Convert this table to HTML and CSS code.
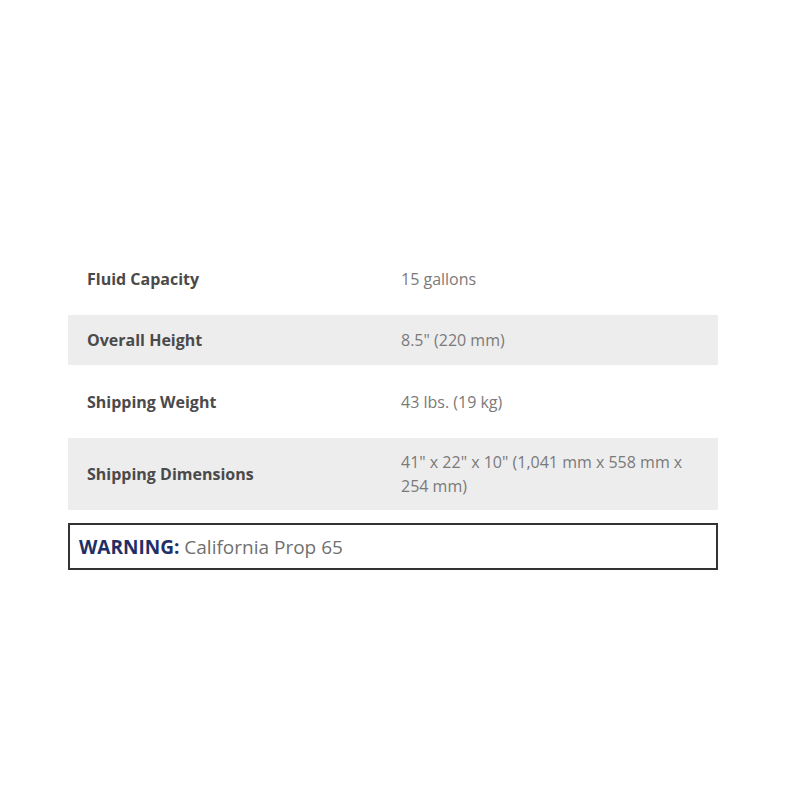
FILE: index.html
```html
<!DOCTYPE html>
<html>
<head>
<meta charset="utf-8">
<link rel="stylesheet" href="styles.css">
</head>
<body>
<div class="page">
  <div class="specs">
    <div class="row">
      <div class="label">Fluid Capacity</div>
      <div class="value">15 gallons</div>
    </div>
    <div class="row shaded">
      <div class="label">Overall Height</div>
      <div class="value">8.5" (220 mm)</div>
    </div>
    <div class="row">
      <div class="label">Shipping Weight</div>
      <div class="value">43 lbs. (19 kg)</div>
    </div>
    <div class="row shaded">
      <div class="label">Shipping Dimensions</div>
      <div class="value">41" x 22" x 10" (1,041 mm x 558 mm x 254 mm)</div>
    </div>
  </div>
  <div class="warning"><span class="warn-label">WARNING:</span> California Prop 65</div>
</div>
</body>
</html>
```
FILE: styles.css
```css
html, body {
  margin: 0;
  padding: 0;
  background: #ffffff;
}
.page {
  width: 650px;
  margin-left: 68px;
  padding-top: 242px;
  font-family: "Open Sans", "Liberation Sans", sans-serif;
}
.specs {
  display: flex;
  flex-direction: column;
}
.row {
  display: grid;
  grid-template-columns: 314px 1fr;
  align-items: center;
  min-height: 73px;
  box-sizing: border-box;
  padding: 0 14px 0 19px;
}
.row.shaded {
  min-height: 50px;
  padding-top: 12px;
  padding-bottom: 12px;
  background: #ededed;
}
.label {
  font-size: 16px;
  font-weight: 700;
  color: #4a4a4a;
  line-height: 24px;
}
.value {
  font-size: 16px;
  color: #7a7a7a;
  line-height: 24px;
}
.warning {
  margin-top: 13px;
  border: 2px solid #333333;
  box-sizing: border-box;
  height: 47px;
  display: flex;
  align-items: center;
  padding-left: 9px;
  font-size: 19px;
  color: #707070;
  white-space: pre;
}
.warn-label {
  font-weight: 700;
  color: #1f2f66;
}
```
